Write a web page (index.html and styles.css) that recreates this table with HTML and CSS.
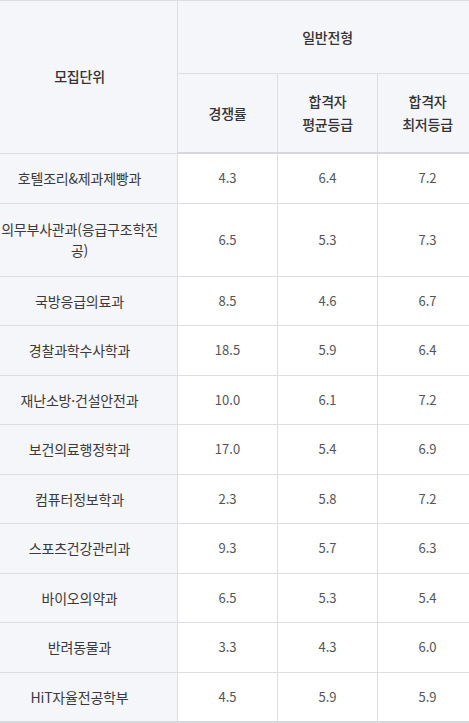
FILE: index.html
```html
<!DOCTYPE html>
<html lang="ko">
<head>
<meta charset="utf-8">
<link rel="stylesheet" href="styles.css">
</head>
<body>
<div class="wrap">
<table class="tbl">
  <colgroup>
    <col class="c1"><col class="c2"><col class="c3"><col class="c4">
  </colgroup>
  <thead>
    <tr class="h1">
      <th rowspan="2" class="unit">모집단위</th>
      <th colspan="3">일반전형</th>
    </tr>
    <tr class="h2">
      <th>경쟁률</th>
      <th>합격자<br>평균등급</th>
      <th>합격자<br>최저등급</th>
    </tr>
  </thead>
  <tbody>
    <tr><td class="name">호텔조리&amp;제과제빵과</td><td>4.3</td><td>6.4</td><td>7.2</td></tr>
    <tr class="tall"><td class="name">의무부사관과(응급구조학전<br>공)</td><td>6.5</td><td>5.3</td><td>7.3</td></tr>
    <tr><td class="name">국방응급의료과</td><td>8.5</td><td>4.6</td><td>6.7</td></tr>
    <tr><td class="name">경찰과학수사학과</td><td>18.5</td><td>5.9</td><td>6.4</td></tr>
    <tr><td class="name">재난소방·건설안전과</td><td>10.0</td><td>6.1</td><td>7.2</td></tr>
    <tr><td class="name">보건의료행정학과</td><td>17.0</td><td>5.4</td><td>6.9</td></tr>
    <tr><td class="name">컴퓨터정보학과</td><td>2.3</td><td>5.8</td><td>7.2</td></tr>
    <tr><td class="name">스포츠건강관리과</td><td>9.3</td><td>5.7</td><td>6.3</td></tr>
    <tr><td class="name">바이오의약과</td><td>6.5</td><td>5.3</td><td>5.4</td></tr>
    <tr><td class="name">반려동물과</td><td>3.3</td><td>4.3</td><td>6.0</td></tr>
    <tr><td class="name">HiT자율전공학부</td><td>4.5</td><td>5.9</td><td>5.9</td></tr>
  </tbody>
</table>
</div>
</body>
</html>
```
FILE: styles.css
```css
html, body {
  margin: 0;
  padding: 0;
  background: #ffffff;
  overflow: hidden;
}
.wrap {
  width: 469px;
  height: 723px;
  overflow: hidden;
  background: #f7f8fa;
}
.tbl {
  margin-left: -19px;
  width: 496px;
  border-collapse: collapse;
  table-layout: fixed;
  font-family: "Noto Sans CJK KR", "Noto Sans", sans-serif;
  font-size: 14px;
  letter-spacing: -0.2px;
  color: #444;
  text-align: center;
}
.c1 { width: 196px; }
.c2 { width: 100px; }
.c3 { width: 100px; }
.c4 { width: 100px; }
.tbl th, .tbl td {
  border: 1px solid #dcdee2;
  padding: 0;
  vertical-align: middle;
}
.tbl th {
  background: #f5f6fa;
  font-weight: 500;
  color: #333;
  line-height: 23px;
}
.h1 th { height: 72px; }
.h2 th { height: 78px; border-bottom: 2px solid #d6d8dc; }
.tbl td {
  background: #ffffff;
  height: 48.5px;
  line-height: 18px;
  color: #555;
  font-size: 13px;
  letter-spacing: 0;
}
.tbl td.name {
  background: #f5f6f9;
  color: #3a3a3a;
  font-size: 14px;
  letter-spacing: -0.2px;
  white-space: nowrap;
}
.tbl tr.tall td { height: 72px; }
.tbl tr.tall td.name { line-height: 21px; }
.tbl tbody tr:last-child td { border-bottom: 2px solid #d6d8dc; }
```
